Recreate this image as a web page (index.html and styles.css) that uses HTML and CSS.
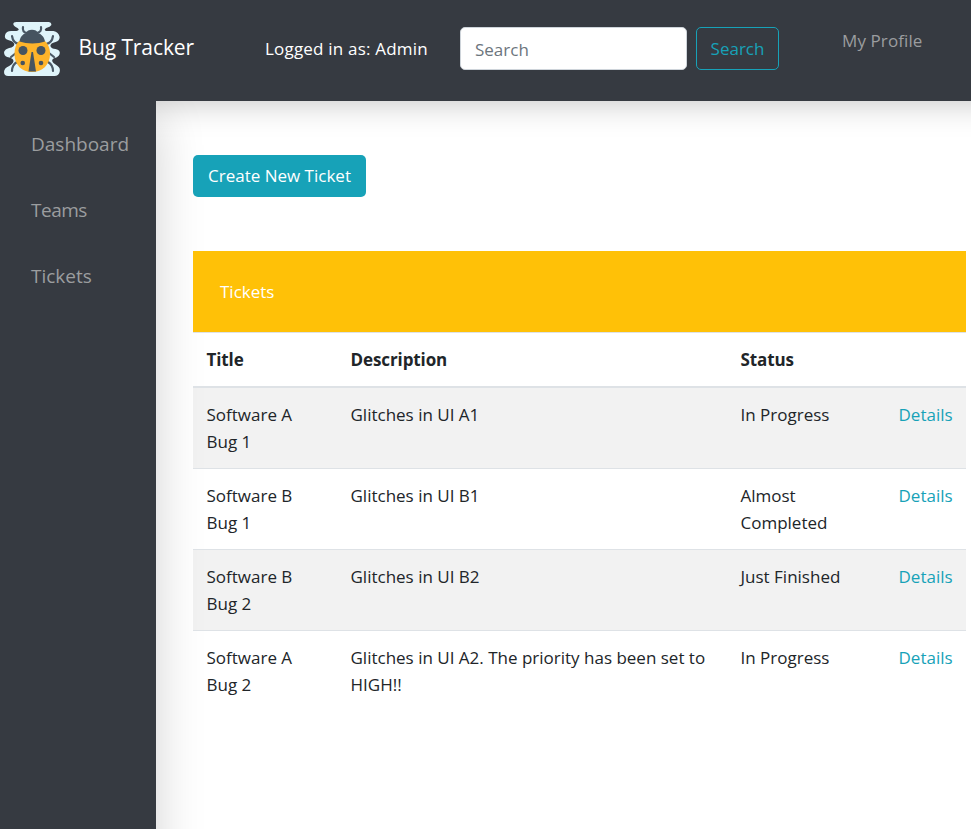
FILE: index.html
```html
<!DOCTYPE html>
<html lang="en">
<head>
<meta charset="utf-8">
<title>Bug Tracker</title>
<link rel="stylesheet" href="styles.css">
</head>
<body>
<header class="navbar">
  <svg class="logo" viewBox="0 0 56 56" aria-hidden="true">
    <path transform="translate(-1 0) scale(1.030 1)" fill="#dff4fa" d="M13 2H44Q47 2 47 5Q46 7 42 8Q39 10 42 11H49Q54 12 55 17Q55 21 51 22Q46 23 46 26Q47 29 51 29Q56 30 55 34Q54 37 50 38Q46 40 49 43L53 46Q56 48 55 52Q54 56 50 56H5Q1 56 1 52Q1 48 6 46Q11 43 10 40Q9 38 4 37Q1 36 1 32Q2 29 6 28Q11 27 11 24Q10 21 5 20Q1 19 2 15Q3 11 8 11H13Q17 10 14 8Q10 6 10 4Q10 2 13 2Z"/>
    <path fill="none" stroke="#4b5966" stroke-width="2.200" stroke-linecap="round" d="M23 13Q18 12 19 7M33 13Q38 12 37 7M15 24Q9 23 8 16M42 24Q48 23 49 16M12 33L7 37M45 33L50 37M13 42Q8 45 8 51M44 42Q49 45 49 51"/>
    <path fill="#feb42a" d="M15 21H41C44 24 46 28 46 34C46 45 38 52 28 52C18 52 10.500 45 10.500 34C10.500 28 12 24 15 21Z"/>
    <path fill="#465460" d="M15.500 21.500C16 17 19 14 22 13C23 8.500 33 8.500 34 13C37 14 40.500 17 41 21.500C34 24 23 24 15.500 21.500Z"/>
    <path fill="#465460" d="M27.500 32H29L32 51.500H24.500Z"/>
    <g fill="#465460"><circle cx="19" cy="30.500" r="4.500"/><circle cx="37" cy="30.500" r="4.500"/><circle cx="18.700" cy="43" r="2.300"/><circle cx="37" cy="43" r="2.300"/></g>
  </svg>
  <a class="brand">Bug Tracker</a>
  <span class="user">Logged in as: Admin</span>
  <form class="search">
    <input class="field" type="text" placeholder="Search" aria-label="Search">
    <button class="search-button" type="button">Search</button>
  </form>
  <a class="profile">My Profile</a>
</header>
<div class="layout">
  <nav class="sidebar">
    <a>Dashboard</a>
    <a class="teams">Teams</a>
    <a>Tickets</a>
  </nav>
  <main class="content">
    <button class="create" type="button">Create New Ticket</button>
    <div class="card-title">Tickets</div>
    <table class="tickets">
      <colgroup><col class="c-title"><col class="c-desc"><col class="c-status"><col></colgroup>
      <thead><tr><th>Title</th><th>Description</th><th>Status</th><th></th></tr></thead>
      <tbody>
        <tr><td>Software A<br>Bug 1</td><td>Glitches in UI A1</td><td>In Progress</td><td><a>Details</a></td></tr>
        <tr><td>Software B<br>Bug 1</td><td>Glitches in UI B1</td><td>Almost<br>Completed</td><td><a>Details</a></td></tr>
        <tr><td>Software B<br>Bug 2</td><td>Glitches in UI B2</td><td>Just Finished</td><td><a>Details</a></td></tr>
        <tr><td>Software A<br>Bug 2</td><td>Glitches in UI A2. The priority has been set to<br>HIGH!!</td><td>In Progress</td><td><a>Details</a></td></tr>
      </tbody>
    </table>
  </main>
</div>
</body>
</html>
```
FILE: styles.css
```css
* { box-sizing: border-box; }
body {
  margin: 0;
  height: 829px;
  overflow: hidden;
  display: flex;
  flex-direction: column;
  background: #fff;
  color: #212529;
  font: 400 17px/27px "Segoe UI", "Open Sans", sans-serif;
  white-space: nowrap;
}
button, input { font: inherit; letter-spacing: inherit; margin: 0; }
.navbar {
  display: flex;
  align-items: flex-start;
  flex: none;
  height: 101px;
  background: #363a41;
  color: #fff;
  box-shadow: 0 -40px 32px 40px rgba(0, 0, 0, .25);
}
.logo { width: 56px; height: 56px; margin: 20px 0 0 4px; flex: none; overflow: visible; }
.brand { width: 186.500px; margin: 34px 0 0 18.500px; font-size: 21px; letter-spacing: -.1px; }
.user { width: 195px; margin-top: 34.500px; letter-spacing: .2px; }
.search { display: flex; gap: 9px; margin-top: 27px; }
.field {
  width: 227px;
  height: 43px;
  padding: 1px 14px 0;
  border: 1px solid #ced4da;
  border-radius: 5px;
  background: #fff;
}
.field::placeholder { color: #6c757d; opacity: 1; }
.search-button {
  width: 83px;
  height: 43px;
  padding: 0;
  border: 1px solid #17a2b8;
  border-radius: 5px;
  background: transparent;
  color: #17a2b8;
}
.profile { margin: 27px 0 0 63px; color: #9b9d9f; letter-spacing: .1px; }
.layout { display: flex; flex: 1; }
.sidebar {
  position: relative;
  display: flex;
  flex-direction: column;
  gap: 36px;
  width: 156px;
  padding: 28px 0 0 31px;
  background: #363a41;
  box-shadow: -40px 54px 46px 40px rgba(0, 0, 0, .18);
  clip-path: inset(0 -80px 0 0);
  color: #9b9d9f;
  font-size: 19px;
  line-height: 30px;
}
.teams { letter-spacing: -.5px; }
.content { position: relative; width: 810px; padding: 54px 0 0 37px; }
.create {
  display: block;
  width: 173px;
  height: 42px;
  padding: 0 0 2px;
  border: 0;
  border-radius: 5px;
  background: #17a2b8;
  color: #fff;
}
.card-title {
  height: 81px;
  margin-top: 54px;
  padding: 27px;
  background: #ffc107;
  color: #fff;
}
.tickets { width: 773px; table-layout: fixed; border-spacing: 0; }
.c-title { width: 144px; }
.c-desc { width: 390px; }
.c-status { width: 158px; }
th, td { padding: 13px 0 0 13.500px; text-align: left; vertical-align: top; }
th { height: 56px; border-top: 1px solid #dee2e6; border-bottom: 2px solid #dee2e6; font-weight: 700; letter-spacing: -.1px; }
td { height: 81px; border-top: 1px solid #dee2e6; }
tbody tr:first-child td { height: 80px; border-top: 0; }
tbody tr:nth-child(odd) { background: rgba(0, 0, 0, .05); }
td a { color: #17a2b8; }
```
